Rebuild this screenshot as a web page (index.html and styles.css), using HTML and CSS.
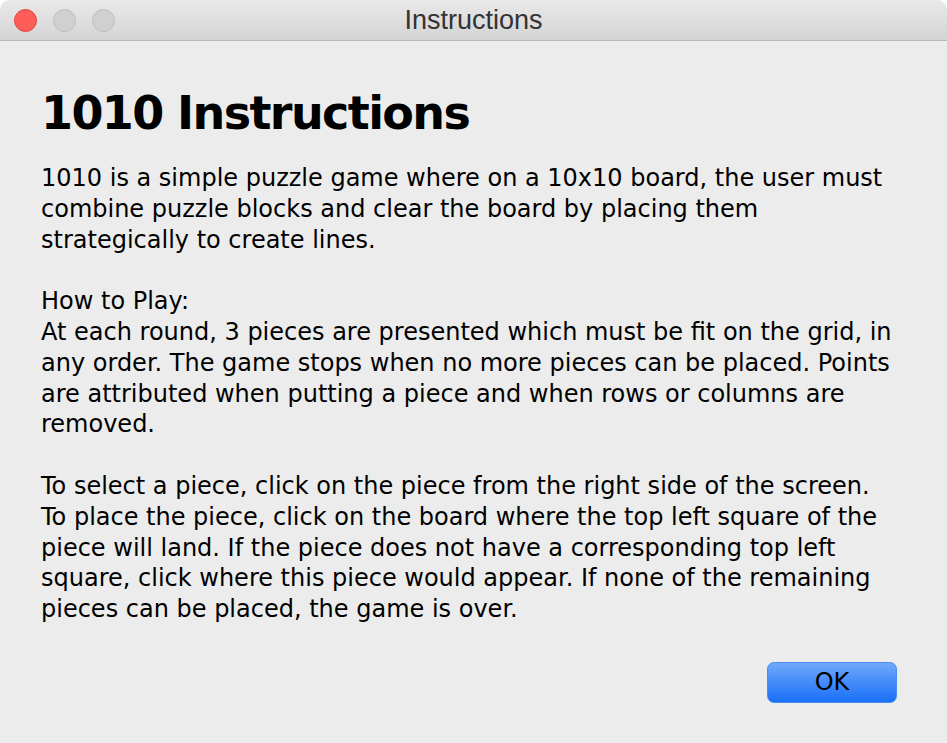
FILE: index.html
```html
<!DOCTYPE html>
<html>
<head>
<meta charset="utf-8">
<link rel="stylesheet" href="styles.css">
</head>
<body>
<div class="window">
  <div class="titlebar">
    <div class="lights">
      <span class="light red"></span>
      <span class="light gray"></span>
      <span class="light gray"></span>
    </div>
    <div class="title">Instructions</div>
  </div>
  <div class="content">
    <h1 class="heading">1010 Instructions</h1>
    <div class="text">
      <p class="para">1010 is a simple puzzle game where on a 10x10 board, the user must<br>combine puzzle blocks and clear the board by placing them<br>strategically to create lines.</p>
      <p class="para">How to Play:<br>At each round, 3 pieces are presented which must be fit on the grid, in<br>any order. The game stops when no more pieces can be placed. Points<br>are attributed when putting a piece and when rows or columns are<br>removed.</p>
      <p class="para">To select a piece, click on the piece from the right side of the screen.<br>To place the piece, click on the board where the top left square of the<br>piece will land. If the piece does not have a corresponding top left<br>square, click where this piece would appear. If none of the remaining<br>pieces can be placed, the game is over.</p>
    </div>
    <div class="actions">
      <button class="ok">OK</button>
    </div>
  </div>
</div>
</body>
</html>
```

FILE: styles.css
```css
html, body {
  margin: 0;
  padding: 0;
  background: #ffffff;
}
body {
  width: 947px;
  height: 743px;
  overflow: hidden;
  font-family: "DejaVu Sans", sans-serif;
}
.window {
  width: 947px;
  height: 743px;
  background: #ececec;
  border-radius: 10px 10px 0 0;
  overflow: hidden;
  display: flex;
  flex-direction: column;
}
.titlebar {
  height: 40px;
  flex: none;
  background: linear-gradient(#e9e9e9, #d4d4d4);
  border-bottom: 1px solid #b9b9b9;
  display: flex;
  align-items: center;
  position: relative;
}
.lights {
  display: flex;
  gap: 16px;
  padding-left: 14px;
}
.light {
  width: 23px;
  height: 23px;
  border-radius: 50%;
  box-sizing: border-box;
}
.light.red {
  background: #fd5f58;
  border: 1px solid #e0443e;
}
.light.gray {
  background: #d0d0d0;
  border: 1px solid #bdbdbd;
}
.title {
  position: absolute;
  left: 0;
  right: 0;
  top: 0;
  bottom: 0;
  display: flex;
  align-items: center;
  justify-content: center;
  font-family: "Liberation Sans", sans-serif;
  font-size: 27px;
  color: #333333;
}
.content {
  padding: 44px 0 0 41px;
  flex: 1;
  display: flex;
  flex-direction: column;
}
.heading {
  margin: 0;
  font-size: 46px;
  line-height: 56px;
  font-weight: bold;
  letter-spacing: -1.6px;
  color: #000;
}
.text {
  margin-top: 22px;
  font-size: 24px;
  line-height: 30.8px;
  color: #000;
  white-space: nowrap;
}
.para {
  margin: 0 0 30.8px 0;
}
.actions {
  display: flex;
  justify-content: flex-end;
  padding-right: 50px;
  margin-top: 6px;
}
.ok {
  width: 130px;
  height: 41px;
  border-radius: 7px;
  border: 1px solid #4a8ef5;
  background: linear-gradient(#6ea9fb, #1a6ff8);
  font-family: "DejaVu Sans", sans-serif;
  font-size: 24px;
  color: #000;
  padding: 0;
}
```
